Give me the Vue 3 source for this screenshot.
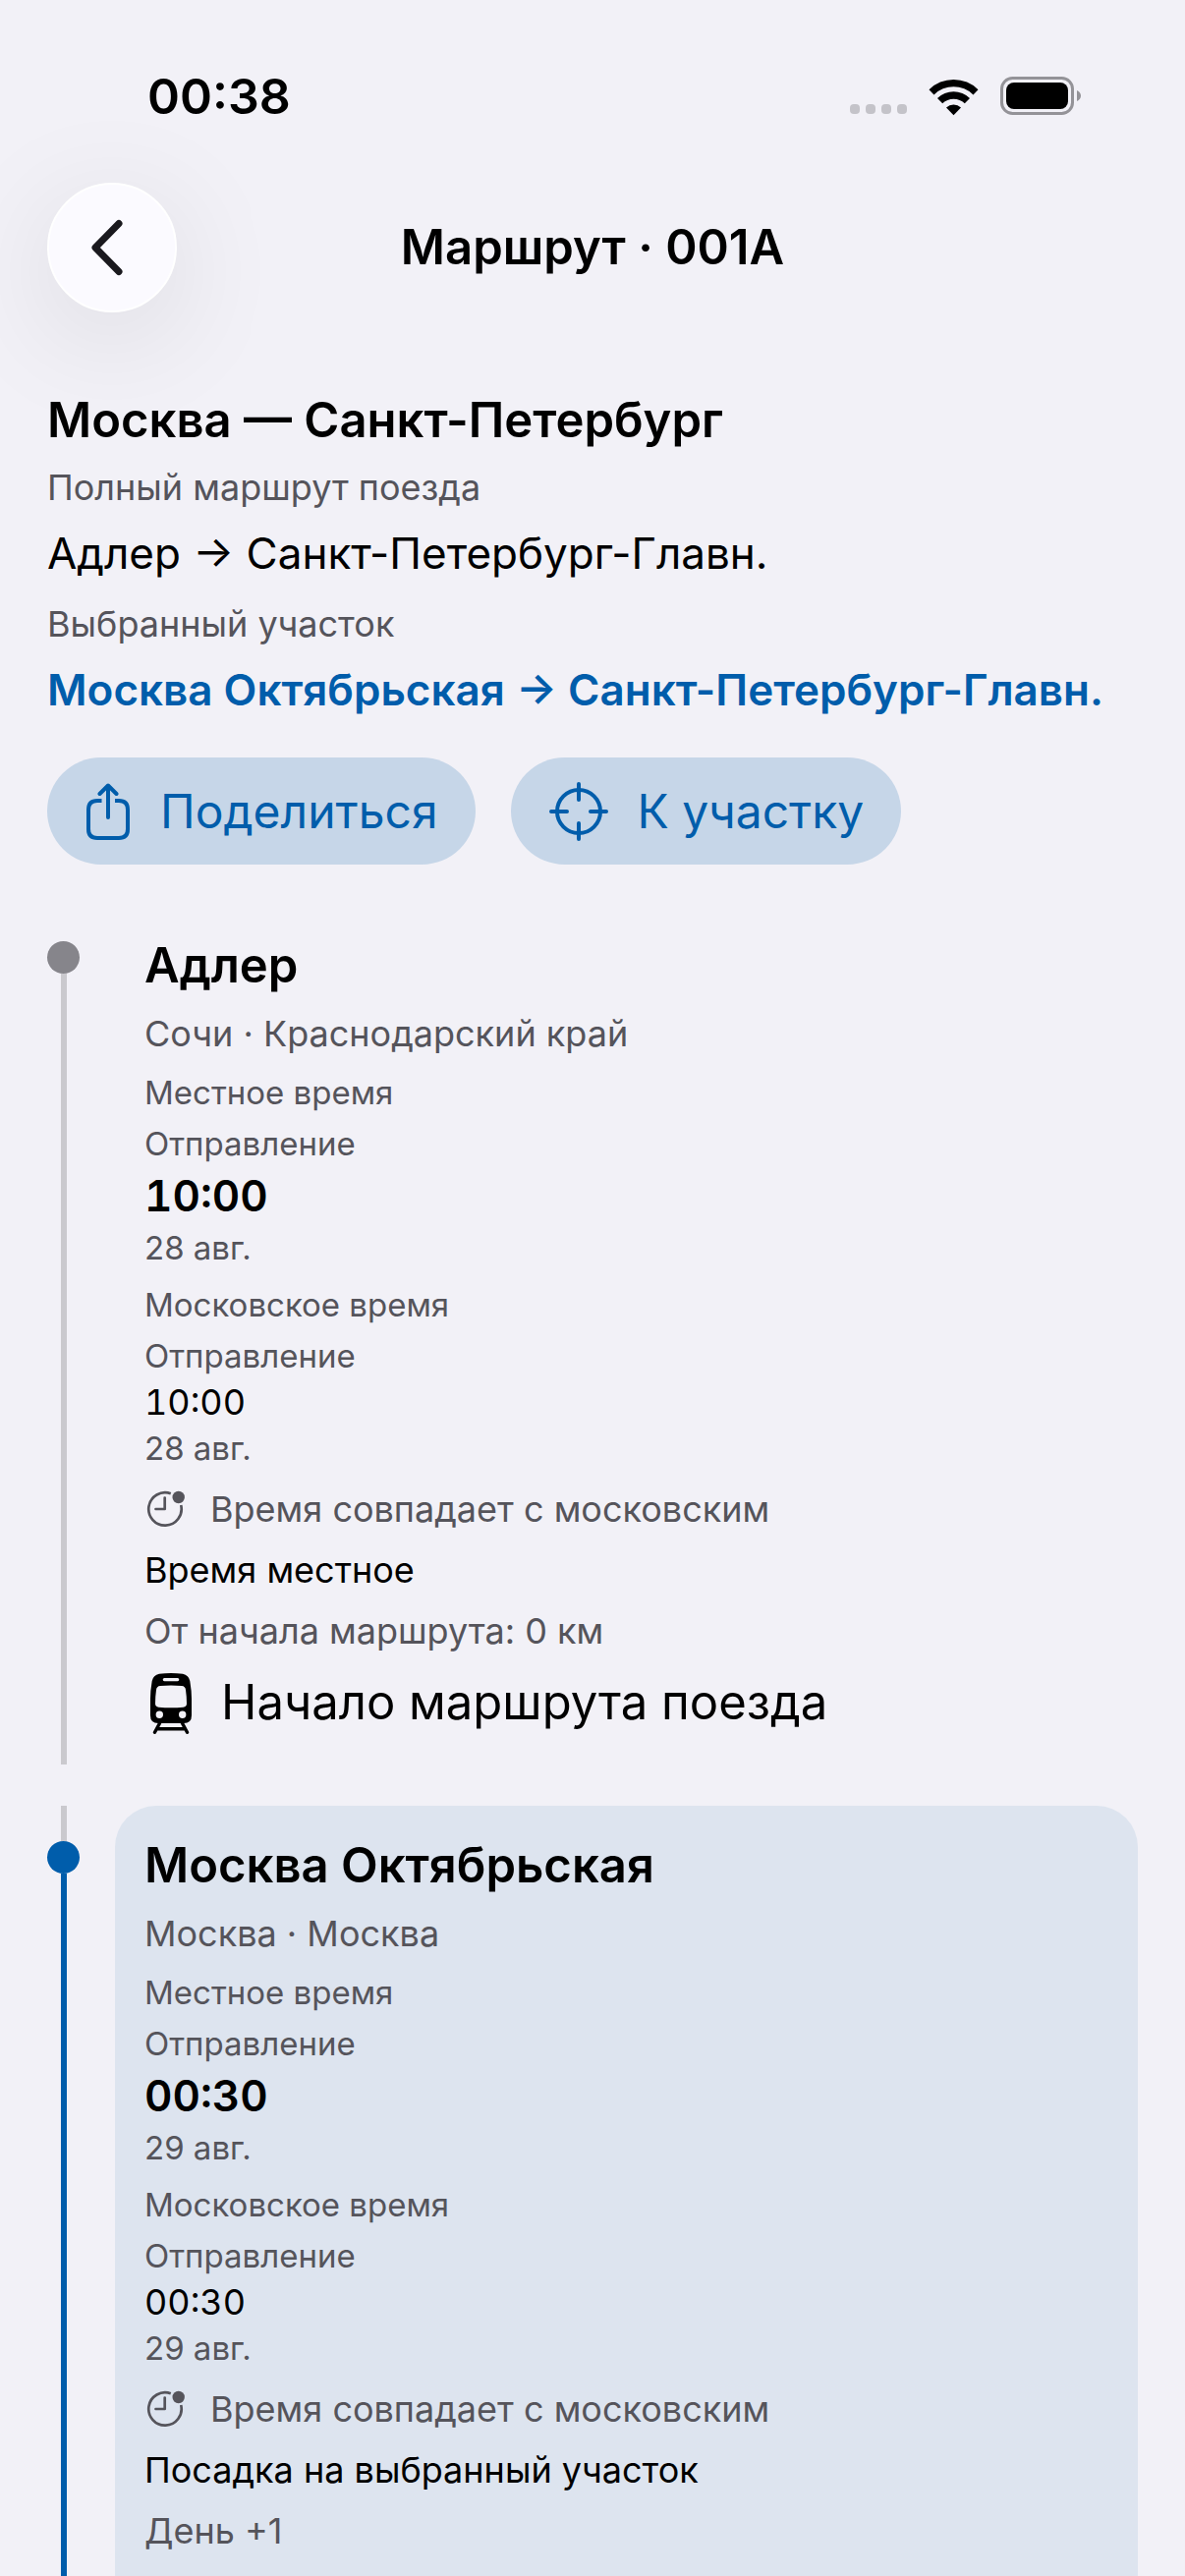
<script setup>
const stops = [
  {
    name: 'Адлер',
    place: 'Сочи · Краснодарский край',
    selected: false,
    local: { time: '10:00', date: '28 авг.' },
    moscow: { time: '10:00', date: '28 авг.' },
    remark: 'Время местное',
    detail: 'От начала маршрута: 0 км',
    terminal: 'Начало маршрута поезда',
  },
  {
    name: 'Москва Октябрьская',
    place: 'Москва · Москва',
    selected: true,
    local: { time: '00:30', date: '29 авг.' },
    moscow: { time: '00:30', date: '29 авг.' },
    remark: 'Посадка на выбранный участок',
    detail: 'День +1',
    terminal: '',
  },
]
</script>

<template>
  <div class="screen">
    <div class="status-bar">
      <span class="clock">00:38</span>
      <div class="indicators">
        <div class="cellular"><i></i><i></i><i></i><i></i></div>
        <svg class="wifi" width="51" height="38" viewBox="0 0 51 38" aria-hidden="true">
          <path d="M0.5 11.2A35.5 35.5 0 0 1 50.5 11.2L45.5 16.4A28.5 28.5 0 0 0 5.5 16.4Z" />
          <path d="M9 20A23.6 23.6 0 0 1 42 20L36.8 25.3A16.2 16.2 0 0 0 14.2 25.3Z" />
          <path d="M18 29.4A11 11 0 0 1 33 29.4L25.5 37.2Z" />
        </svg>
        <svg class="battery" width="82" height="40" viewBox="0 0 82 40" aria-hidden="true">
          <rect x="1.5" y="1.5" width="72" height="36" rx="11" fill="none" stroke="#949398" stroke-width="3" />
          <rect x="6" y="6" width="63" height="27" rx="8" />
          <path d="M78 14C80.5 15 82 17 82 19.5S80.5 24 78 25Z" fill="#949398" />
        </svg>
      </div>
    </div>

    <header class="nav">
      <button class="back" type="button" aria-label="Назад">
        <svg width="34" height="58" viewBox="0 0 34 58" aria-hidden="true">
          <path d="M29 4.5L5 29L29 53.5" fill="none" stroke="#1a191e" stroke-width="7" stroke-linecap="round" stroke-linejoin="round" />
        </svg>
      </button>
      <h1 class="nav-title">Маршрут · 001А</h1>
    </header>

    <main class="content">
      <section class="summary">
        <h2 class="heading">Москва — Санкт-Петербург</h2>
        <dl class="route">
          <div class="pair">
            <dt class="note">Полный маршрут поезда</dt>
            <dd class="value">Адлер → Санкт-Петербург-Главн.</dd>
          </div>
          <div class="pair">
            <dt class="note">Выбранный участок</dt>
            <dd class="value accent">Москва Октябрьская → Санкт-Петербург-Главн.</dd>
          </div>
        </dl>
      </section>

      <div class="actions">
        <button class="pill" type="button">
          <svg width="48" height="58" viewBox="-2 0 48 58" fill="none" stroke="currentColor" stroke-width="4" aria-hidden="true">
            <path d="M15.5 18H11Q2 18 2 27V47Q2 56 11 56H33Q42 56 42 47V27Q42 18 33 18H29" />
            <path d="M22 35V3M13.5 11L22 2.5L30.5 11" stroke-linecap="round" stroke-linejoin="round" />
          </svg>
          <span>Поделиться</span>
        </button>
        <button class="pill" type="button">
          <svg width="62" height="62" viewBox="0 0 62 62" fill="none" stroke="currentColor" stroke-width="4" aria-hidden="true">
            <circle cx="31" cy="31" r="22" />
            <path d="M31 3V19M31 43V59M3 31H19M43 31H59" stroke-linecap="round" />
          </svg>
          <span>К участку</span>
        </button>
      </div>

      <ol class="stops">
        <li v-for="(stop, index) in stops" :key="stop.name" class="stop" :class="{ selected: stop.selected }">
          <div class="rail">
            <span class="segment lead" :class="{ hidden: index === 0 }"></span>
            <span class="dot"></span>
            <span class="segment tail"></span>
          </div>
          <article class="card">
            <h2 class="heading">{{ stop.name }}</h2>
            <p class="note">{{ stop.place }}</p>
            <div class="times">
              <section class="time-block">
                <h3 class="caption">Местное время</h3>
                <div class="event">
                  <span class="caption">Отправление</span>
                  <time class="time-large">{{ stop.local.time }}</time>
                  <span class="caption">{{ stop.local.date }}</span>
                </div>
              </section>
              <section class="time-block">
                <h3 class="caption">Московское время</h3>
                <div class="event">
                  <span class="caption">Отправление</span>
                  <time class="time-small">{{ stop.moscow.time }}</time>
                  <span class="caption">{{ stop.moscow.date }}</span>
                </div>
              </section>
            </div>
            <p class="note with-icon">
              <svg width="42" height="38" viewBox="0 0 42 38" fill="none" stroke="currentColor" stroke-width="2.7" aria-hidden="true">
                <path d="M26.8 3.3A16.7 16.7 0 1 0 37.2 15" />
                <path d="M20.7 7.5V19H11.5" stroke-linecap="round" stroke-linejoin="round" />
                <circle cx="34.7" cy="7" r="6.2" fill="currentColor" stroke="none" />
              </svg>
              <span>Время совпадает с московским</span>
            </p>
            <p class="note strong">{{ stop.remark }}</p>
            <p class="note">{{ stop.detail }}</p>
            <p v-if="stop.terminal" class="terminal">
              <svg width="50" height="64" viewBox="0 0 50 64" aria-hidden="true">
                <path
                  fill-rule="evenodd"
                  d="M15 2.8Q27 1 39 2.8Q45 4 46.3 10Q48 20 48 28V45Q48 53 40 53H14Q6 53 6 45V28Q6 20 7.7 10Q9 4 15 2.8ZM20.4 7Q18.7 7 18.7 8.6T20.4 10.3H33.6Q35.3 10.3 35.3 8.6T33.6 7ZM16 15Q12.5 15.3 12 19Q11 26 11 33Q11 36.3 14.5 36.7Q27 38 39.5 36.7Q43 36.3 43 33Q43 26 42 19Q41.5 15.3 38 15Q27 14 16 15ZM15.3 40.6A3.7 3.7 0 1 0 15.3 48A3.7 3.7 0 1 0 15.3 40.6ZM38.7 40.6A3.7 3.7 0 1 0 38.7 48A3.7 3.7 0 1 0 38.7 40.6Z"
                />
                <path d="M15.5 53L10.5 62.3M38.5 53L43.5 62.3M13 58.7H41" fill="none" stroke="#000" stroke-width="3.4" stroke-linecap="round" />
              </svg>
              <span>{{ stop.terminal }}</span>
            </p>
          </article>
        </li>
      </ol>
    </main>
  </div>
</template>

<style>
body {
  margin: 0;
  background: #f2f1f7;
}
</style>

<style scoped>
.screen {
  --blue: #005dab;
  --muted: #55545b;
  height: 100vh;
  overflow-x: hidden;
  overflow-y: auto;
  scrollbar-width: none;
  background: #f2f1f7;
  color: #000;
  font-family: Inter, "Noto Sans", sans-serif;
}

h1,
h2,
h3,
p,
dl,
dd,
ol {
  margin: 0;
  padding: 0;
  font-weight: 400;
}

svg {
  display: block;
  flex: none;
}

button {
  border: 0;
  font: inherit;
  cursor: pointer;
}

.status-bar {
  display: flex;
  justify-content: space-between;
  align-items: center;
  padding: 68px 106px 0 150px;
}

.clock {
  font-size: 50px;
  line-height: 60px;
  font-weight: 600;
}

.indicators {
  display: flex;
  align-items: flex-end;
  gap: 22px;
}

.cellular {
  display: flex;
  gap: 6px;
  padding-bottom: 2px;
}

.cellular i {
  width: 10px;
  height: 10px;
  border-radius: 4px;
  background: #c4c3c9;
}

.nav {
  display: grid;
  grid-template-columns: 132px 1fr 132px;
  align-items: center;
  padding: 58px 48px 0;
}

.back {
  display: flex;
  align-items: center;
  justify-content: center;
  box-sizing: border-box;
  width: 132px;
  height: 132px;
  padding: 0 10px 0 0;
  border: 2px solid #fff;
  border-radius: 50%;
  background: #fbfaff;
  box-shadow: 0 24px 120px rgba(0, 0, 0, 0.1);
}

.nav-title {
  font-size: 49px;
  line-height: 64px;
  font-weight: 600;
  text-align: center;
}

.content {
  padding: 79px 48px 42px;
}

.summary {
  display: flex;
  flex-direction: column;
  gap: 13px;
}

.route {
  display: flex;
  flex-direction: column;
  gap: 18px;
}

.pair {
  display: flex;
  flex-direction: column;
  gap: 13px;
}

.heading {
  font-size: 49px;
  line-height: 62px;
  font-weight: 600;
}

.value {
  font-size: 44px;
  line-height: 60px;
}

.accent {
  color: var(--blue);
  font-weight: 600;
  white-space: nowrap;
}

.note {
  color: var(--muted);
  font-size: 36px;
  line-height: 48px;
}

.strong {
  color: #000;
}

.caption {
  color: var(--muted);
  font-size: 33px;
  line-height: 40px;
}

.actions {
  display: flex;
  gap: 36px;
  padding-top: 39px;
}

.pill {
  display: flex;
  align-items: center;
  gap: 29px;
  height: 109px;
  padding: 0 38px;
  border-radius: 55px;
  background: #c6d6e8;
  color: var(--blue);
  font-size: 48px;
  line-height: 62px;
}

.stops {
  display: flex;
  flex-direction: column;
  gap: 42px;
  padding-top: 42px;
  list-style: none;
}

.stop {
  display: flex;
  gap: 36px;
  min-height: 874px;
}

.rail {
  display: flex;
  flex: none;
  flex-direction: column;
  align-items: center;
  width: 33px;
}

.segment {
  width: 6px;
  background: #cac9ce;
}

.lead {
  height: 36px;
}

.hidden {
  visibility: hidden;
}

.tail {
  flex: 1;
}

.dot {
  width: 33px;
  height: 33px;
  border-radius: 50%;
  background: #86858b;
}

.selected .dot,
.selected .tail {
  background: var(--blue);
}

.card {
  display: flex;
  flex: 1;
  flex-direction: column;
  gap: 14px;
  padding: 30px 30px 28px;
  border-radius: 42px;
}

.selected .card {
  background: #dde4ef;
}

.times {
  display: flex;
  flex-direction: column;
  gap: 18px;
  padding: 2px 0 4px;
}

.time-block {
  display: flex;
  flex-direction: column;
  gap: 12px;
}

.event {
  display: flex;
  flex-direction: column;
  gap: 3px;
}

.time-large,
.time-small {
  font-variant-numeric: tabular-nums;
}

.time-large {
  font-size: 44px;
  line-height: 60px;
  font-weight: 600;
}

.time-small {
  font-size: 36px;
  line-height: 48px;
}

.with-icon {
  display: flex;
  align-items: center;
  gap: 25px;
}

.terminal {
  display: flex;
  align-items: center;
  gap: 28px;
  font-size: 49px;
  line-height: 70px;
}
</style>
